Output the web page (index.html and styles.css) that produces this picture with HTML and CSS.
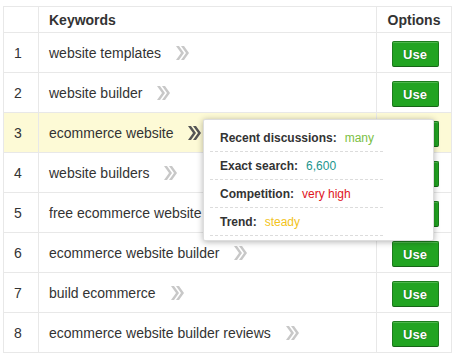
FILE: index.html
```html
<!DOCTYPE html>
<html>
<head>
<meta charset="utf-8">
<link rel="stylesheet" href="styles.css">
</head>
<body>
<div class="wrap">
<table class="kw">
<thead>
<tr><th class="num"></th><th class="word">Keywords</th><th class="opt">Options</th></tr>
</thead>
<tbody>
<tr><td class="num">1</td><td class="word">website templates <span class="chev"><svg width="14" height="16" viewBox="0 0 14 16"><path d="M1 1 L6 8 L1 15 L4 15 L9 8 L4 1 Z M6 1 L11 8 L6 15 L9 15 L14 8 L9 1 Z"/></svg></span></td><td class="opt"><button class="use">Use</button></td></tr>
<tr><td class="num">2</td><td class="word">website builder <span class="chev"><svg width="14" height="16" viewBox="0 0 14 16"><path d="M1 1 L6 8 L1 15 L4 15 L9 8 L4 1 Z M6 1 L11 8 L6 15 L9 15 L14 8 L9 1 Z"/></svg></span></td><td class="opt"><button class="use">Use</button></td></tr>
<tr class="hl"><td class="num">3</td><td class="word">ecommerce website <span class="chev dark"><svg width="14" height="16" viewBox="0 0 14 16"><path d="M1 1 L6 8 L1 15 L4 15 L9 8 L4 1 Z M6 1 L11 8 L6 15 L9 15 L14 8 L9 1 Z"/></svg></span></td><td class="opt"><button class="use">Use</button></td></tr>
<tr><td class="num">4</td><td class="word">website builders <span class="chev"><svg width="14" height="16" viewBox="0 0 14 16"><path d="M1 1 L6 8 L1 15 L4 15 L9 8 L4 1 Z M6 1 L11 8 L6 15 L9 15 L14 8 L9 1 Z"/></svg></span></td><td class="opt"><button class="use">Use</button></td></tr>
<tr><td class="num">5</td><td class="word">free ecommerce website <span class="chev"><svg width="14" height="16" viewBox="0 0 14 16"><path d="M1 1 L6 8 L1 15 L4 15 L9 8 L4 1 Z M6 1 L11 8 L6 15 L9 15 L14 8 L9 1 Z"/></svg></span></td><td class="opt"><button class="use">Use</button></td></tr>
<tr><td class="num">6</td><td class="word">ecommerce website builder <span class="chev"><svg width="14" height="16" viewBox="0 0 14 16"><path d="M1 1 L6 8 L1 15 L4 15 L9 8 L4 1 Z M6 1 L11 8 L6 15 L9 15 L14 8 L9 1 Z"/></svg></span></td><td class="opt"><button class="use">Use</button></td></tr>
<tr><td class="num">7</td><td class="word">build ecommerce <span class="chev"><svg width="14" height="16" viewBox="0 0 14 16"><path d="M1 1 L6 8 L1 15 L4 15 L9 8 L4 1 Z M6 1 L11 8 L6 15 L9 15 L14 8 L9 1 Z"/></svg></span></td><td class="opt"><button class="use">Use</button></td></tr>
<tr><td class="num">8</td><td class="word">ecommerce website builder reviews <span class="chev"><svg width="14" height="16" viewBox="0 0 14 16"><path d="M1 1 L6 8 L1 15 L4 15 L9 8 L4 1 Z M6 1 L11 8 L6 15 L9 15 L14 8 L9 1 Z"/></svg></span></td><td class="opt"><button class="use">Use</button></td></tr>
</tbody>
</table>
<div class="pop">
<div class="pr"><b>Recent discussions:</b><span class="v many">many</span></div>
<div class="pr"><b>Exact search:</b><span class="v exact">6,600</span></div>
<div class="pr"><b>Competition:</b><span class="v comp">very high</span></div>
<div class="pr"><b>Trend:</b><span class="v trend">steady</span></div>
</div>
</div>
</body>
</html>
```
FILE: styles.css
```css
html, body { margin: 0; background: #fff; }
body { padding: 6px 4px 0 3px; font-family: "Liberation Sans", Arial, sans-serif; color: #333; }
.wrap { position: relative; width: 449px; }
.kw { border-collapse: collapse; width: 449px; font-size: 14px; table-layout: fixed; }
.kw th, .kw td { border: 1px solid #e8e8e8; padding: 0; }
.kw th { height: 25px; font-weight: bold; text-align: left; }
.kw td { height: 39px; }
.kw .num { width: 35px; padding-left: 10px; box-sizing: border-box; }
th.num { width: 36px; }
.kw .word { padding-left: 10px; white-space: nowrap; overflow: hidden; }
.kw .opt { width: 74px; text-align: center; }
.kw td.opt { padding-top: 3px; height: 36px; }
.kw th.opt { text-align: center; }
.hl td { background: #fdfad6; }
.chev { display: inline-block; margin-left: 10px; vertical-align: -3px; fill: #c8c8c8; }
.chev.dark { fill: #555; }
.chev svg { display: block; }
.use { width: 47px; height: 26px; margin-left: 2px; background: #22a422; border: 1px solid #1c7c1c; border-bottom-color: #176417; border-radius: 2px; color: #fff; font: bold 13px "Liberation Sans", Arial, sans-serif; text-shadow: 0 0 1px rgba(0,0,0,.5); box-shadow: inset 0 1px 0 rgba(255,255,255,.2); padding: 0; }
.pop { position: absolute; left: 200px; top: 113px; width: 231px; box-sizing: border-box; padding: 4px 50px 4px 6px; background: #fff; border: 1px solid #ddd; border-radius: 2px; box-shadow: 0 1px 6px rgba(0,0,0,.3); font-size: 12px; }
.pr { height: 27px; line-height: 28px; border-bottom: 1px dashed #dcdcdc; padding-left: 10px; }
.pr b { color: #333; }
.v { margin-left: 8px; }
.many { color: #7bc043; }
.exact { color: #21968e; }
.comp { color: #e0161e; }
.trend { color: #f2c31c; }
```
